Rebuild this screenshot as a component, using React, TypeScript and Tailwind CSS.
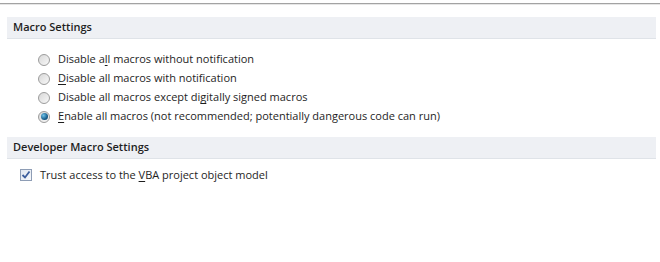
import type { ReactNode } from 'react';

const font = { fontFamily: '"Open Sans", "Noto Sans", sans-serif' };

function Header({ children }: { children: ReactNode }) {
  return (
    <div className="ml-[7px] mr-[4px] h-[22px] flex items-center pl-[6px] bg-[#eef0f4] border-b border-[#dfe3e8] text-[11px] font-semibold text-[#1e1e1e]">
      {children}
    </div>
  );
}

function Radio({ checked }: { checked?: boolean }) {
  return (
    <span className="w-[12px] h-[12px] rounded-full border border-[#9c9c9c] bg-gradient-to-br from-[#d8d8d8] to-[#f8f8f8] flex items-center justify-center shrink-0">
      {checked && (
        <span className="w-[7px] h-[7px] rounded-full bg-[radial-gradient(circle_at_35%_35%,#6fc3ea,#1a5f8c_60%,#0e3e60)]" />
      )}
    </span>
  );
}

function Key({ children }: { children: ReactNode }) {
  return <span className="underline underline-offset-2 [text-decoration-skip-ink:none]">{children}</span>;
}

const options: { label: ReactNode; checked?: boolean }[] = [
  { label: <>Disable a<Key>l</Key>l macros without notification</> },
  { label: <><Key>D</Key>isable all macros with notification</> },
  { label: <>Disable all macros except di<Key>g</Key>itally signed macros</> },
  { label: <><Key>E</Key>nable all macros (not recommended; potentially dangerous code can run)</>, checked: true },
];

export default function App() {
  return (
    <div className="w-[660px] h-[262px] bg-white text-[#1e1e1e] overflow-hidden" style={font}>
      <div className="pt-[3px]">
        <div className="h-[2px] bg-[#a3a3a3] border-b border-[#e6e6e6]" />
      </div>
      <div className="mt-[12px]">
        <Header>Macro Settings</Header>
      </div>
      <div className="pl-[38px] pt-[11px] flex flex-col text-[11px]">
        {options.map((o, i) => (
          <label key={i} className="h-[19px] flex items-center gap-[8px]">
            <Radio checked={o.checked} />
            <span>{o.label}</span>
          </label>
        ))}
      </div>
      <div className="mt-[11px]">
        <Header>Developer Macro Settings</Header>
      </div>
      <div className="pl-[20px] pt-[8px] flex items-center gap-[8px] text-[11px]">
        <span className="w-[12px] h-[12px] border border-[#8e9db5] bg-gradient-to-br from-[#dfe6f0] to-[#f6f8fb] flex items-center justify-center">
          <svg width="10" height="10" viewBox="0 0 10 10">
            <path d="M1.5 5 L4 7.5 L8.5 1.5" fill="none" stroke="#3a5d9c" strokeWidth="1.8" />
          </svg>
        </span>
        <span>
          Trust access to the <Key>V</Key>BA project object model
        </span>
      </div>
    </div>
  );
}
